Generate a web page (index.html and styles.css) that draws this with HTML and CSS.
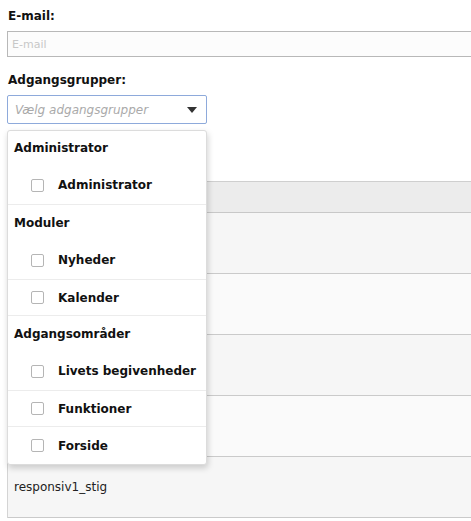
FILE: index.html
```html
<!DOCTYPE html>
<html lang="da">
<head>
<meta charset="utf-8">
<title>Bruger</title>
<link rel="stylesheet" href="styles.css">
</head>
<body>
<div class="page">
  <div class="field">
    <label class="label">E-mail:</label>
    <input class="input" type="text" placeholder="E-mail">
  </div>
  <div class="field field-groups">
    <label class="label">Adgangsgrupper:</label>
    <div class="select">
      <span class="select-ph">Vælg adgangsgrupper</span>
      <span class="caret"></span>
    </div>
    <div class="dropdown">
      <div class="group">
        <div class="group-label">Administrator</div>
        <div class="opt first"><span class="cb"></span><span>Administrator</span></div>
      </div>
      <div class="group">
        <div class="group-label">Moduler</div>
        <div class="opt first"><span class="cb"></span><span>Nyheder</span></div>
        <div class="opt"><span class="cb"></span><span>Kalender</span></div>
      </div>
      <div class="group">
        <div class="group-label">Adgangsområder</div>
        <div class="opt first"><span class="cb"></span><span>Livets begivenheder</span></div>
        <div class="opt"><span class="cb"></span><span>Funktioner</span></div>
        <div class="opt last"><span class="cb"></span><span>Forside</span></div>
      </div>
    </div>
  </div>
  <div class="table">
    <div class="thead"></div>
    <div class="row odd"></div>
    <div class="row even"></div>
    <div class="row odd"></div>
    <div class="row even"></div>
    <div class="row odd"><span class="cell">responsiv1_stig</span></div>
  </div>
</div>
</body>
</html>
```
FILE: styles.css
```css
html, body {
  margin: 0;
  padding: 0;
  background: #fff;
}
body {
  font-family: "DejaVu Sans", Verdana, sans-serif;
  font-size: 12px;
  color: #111;
  overflow: hidden;
}
.page {
  padding: 7px 0 0 7px;
}
.field {
  display: flex;
  flex-direction: column;
}
.label {
  font-weight: bold;
  font-size: 12px;
  line-height: 14px;
  padding: 2px 0 0 1px;
  color: #111;
}
.input {
  margin-top: 8px;
  box-sizing: border-box;
  width: 480px;
  height: 26px;
  border: 1px solid #b8b8b8;
  background: #fcfcfc;
  font-family: "DejaVu Sans", Verdana, sans-serif;
  font-size: 11px;
  padding: 0 4px;
  outline: none;
}
.input::placeholder {
  color: #c8c8c8;
}
.field-groups {
  position: relative;
  margin-top: 14px;
}
.select {
  margin-top: 8px;
  box-sizing: border-box;
  width: 200px;
  height: 29px;
  border: 1px solid #8eaadb;
  border-radius: 2px;
  background: #fff;
  display: flex;
  align-items: center;
  justify-content: space-between;
  padding: 0 9px 0 7px;
}
.select-ph {
  font-style: italic;
  color: #aaa;
  font-size: 12px;
}
.caret {
  width: 0;
  height: 0;
  border-left: 5px solid transparent;
  border-right: 5px solid transparent;
  border-top: 6px solid #333;
}
.dropdown {
  position: absolute;
  left: 0;
  top: 59px;
  width: 200px;
  box-sizing: border-box;
  background: #fff;
  border: 1px solid #dcdcdc;
  border-radius: 3px;
  box-shadow: 1px 3px 6px rgba(0, 0, 0, 0.18);
  z-index: 5;
}
.group-label {
  font-weight: bold;
  height: 35px;
  display: flex;
  align-items: center;
  padding-left: 6px;
}
.group:first-child .group-label {
  height: 34px;
}
.opt {
  display: flex;
  align-items: center;
  height: 35px;
  border-bottom: 1px solid #ececec;
  font-weight: bold;
  padding-left: 23px;
}
.opt.first {
  height: 39px;
}
.opt.last {
  border-bottom: none;
  height: 37px;
}
.cb {
  width: 11px;
  height: 11px;
  border: 1px solid #b5b5b5;
  border-radius: 2px;
  background: #fff;
  margin-right: 14px;
  flex: none;
}
.opt.first .cb {
  margin-top: 2px;
}
.table {
  margin-top: 57px;
  border-left: 1px solid #d4d4d4;
}
.thead {
  height: 30px;
  background: #ececec;
  border-top: 1px solid #cfcfcf;
  border-bottom: 1px solid #c8c8c8;
}
.row {
  height: 60px;
  border-bottom: 1px solid #cacaca;
  display: flex;
  align-items: center;
}
.row.odd {
  background: #f6f6f6;
}
.row.even {
  background: #fafafa;
}
.cell {
  padding-left: 6px;
  color: #222;
}
```
